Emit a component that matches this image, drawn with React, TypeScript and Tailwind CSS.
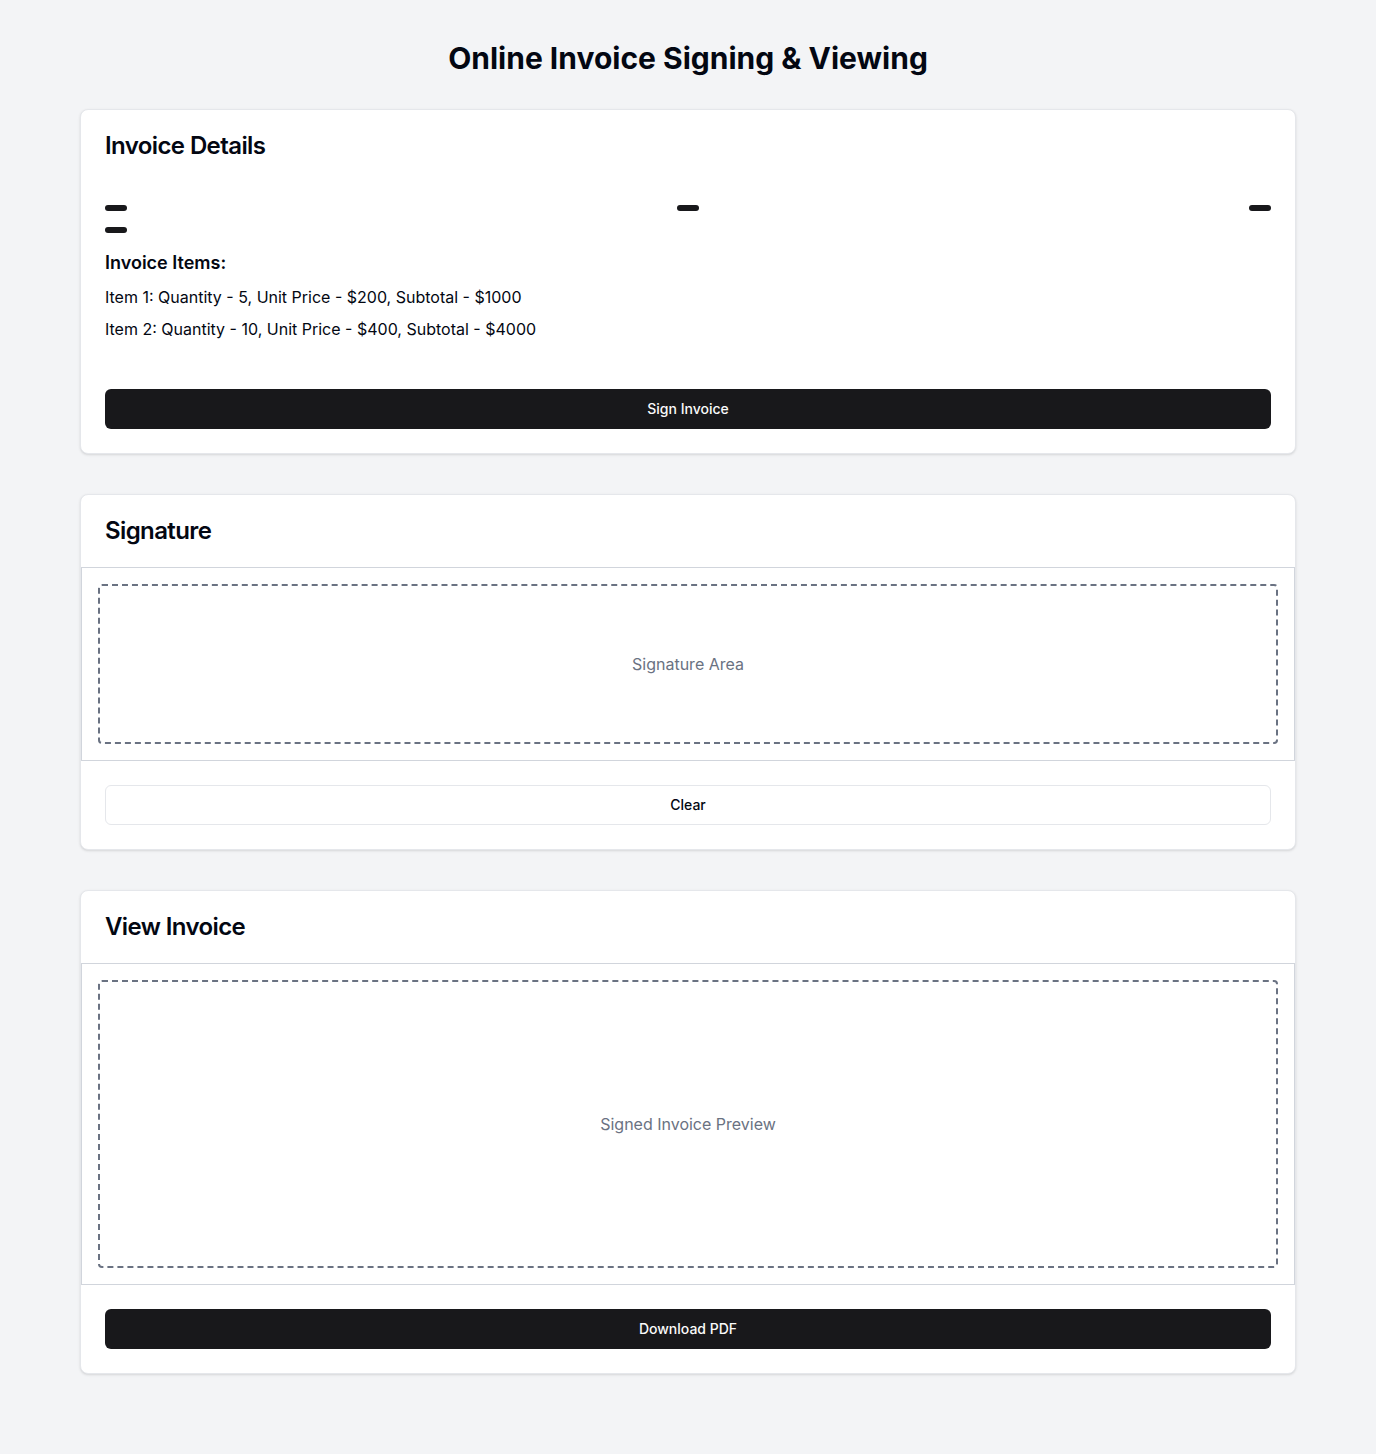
import React from 'react';

const Badge: React.FC = () => (
  <span className="inline-flex items-center rounded-full border border-transparent bg-zinc-900 px-2.5 py-0.5 text-xs font-semibold text-white"></span>
);

const Card: React.FC<{ title: string; children: React.ReactNode }> = ({ title, children }) => (
  <div className="rounded-lg border border-gray-200 bg-white shadow-sm">
    <div className="flex flex-col space-y-1.5 p-6">
      <h2 className="text-2xl font-semibold leading-none tracking-tight text-gray-950">{title}</h2>
    </div>
    {children}
  </div>
);

const App: React.FC = () => {
  const items = [
    { name: 'Item 1', quantity: 5, unitPrice: 200 },
    { name: 'Item 2', quantity: 10, unitPrice: 400 },
  ];

  return (
    <div className="min-h-screen bg-gray-100 px-20 py-10 font-['Inter',sans-serif] text-gray-950">
      <h1 className="mb-[33px] text-center text-3xl font-bold">Online Invoice Signing &amp; Viewing</h1>

      <div className="space-y-10">
        {/* Invoice details */}
        <Card title="Invoice Details">
          <div className="px-6 pb-6">
            <div className="mt-[23px] flex justify-between">
              <Badge />
              <Badge />
              <Badge />
            </div>
            <div className="mt-4 flex">
              <Badge />
            </div>
            <h3 className="mt-4 text-lg font-semibold">Invoice Items:</h3>
            <ul className="mt-2 space-y-2">
              {items.map((item) => (
                <li key={item.name}>
                  {item.name}: Quantity - {item.quantity}, Unit Price - ${item.unitPrice}, Subtotal - $
                  {item.quantity * item.unitPrice}
                </li>
              ))}
            </ul>
            <button className="mt-12 inline-flex h-10 w-full items-center justify-center rounded-md bg-zinc-900 px-4 text-sm font-medium text-zinc-50">
              Sign Invoice
            </button>
          </div>
        </Card>

        {/* Signature */}
        <Card title="Signature">
          <div className="border border-gray-300 p-4">
            <div className="flex h-40 items-center justify-center rounded-sm border-2 border-dashed border-gray-500 text-gray-500">
              Signature Area
            </div>
          </div>
          <div className="flex items-center p-6">
            <button className="inline-flex h-10 w-full items-center justify-center rounded-md border border-gray-200 bg-white px-4 text-sm font-medium">
              Clear
            </button>
          </div>
        </Card>

        {/* View invoice */}
        <Card title="View Invoice">
          <div className="border border-gray-300 p-4">
            <div className="flex h-72 items-center justify-center rounded-sm border-2 border-dashed border-gray-500 text-gray-500">
              Signed Invoice Preview
            </div>
          </div>
          <div className="flex items-center p-6">
            <button className="inline-flex h-10 w-full items-center justify-center rounded-md bg-zinc-900 px-4 text-sm font-medium text-zinc-50">
              Download PDF
            </button>
          </div>
        </Card>
      </div>
    </div>
  );
};

export default App;
